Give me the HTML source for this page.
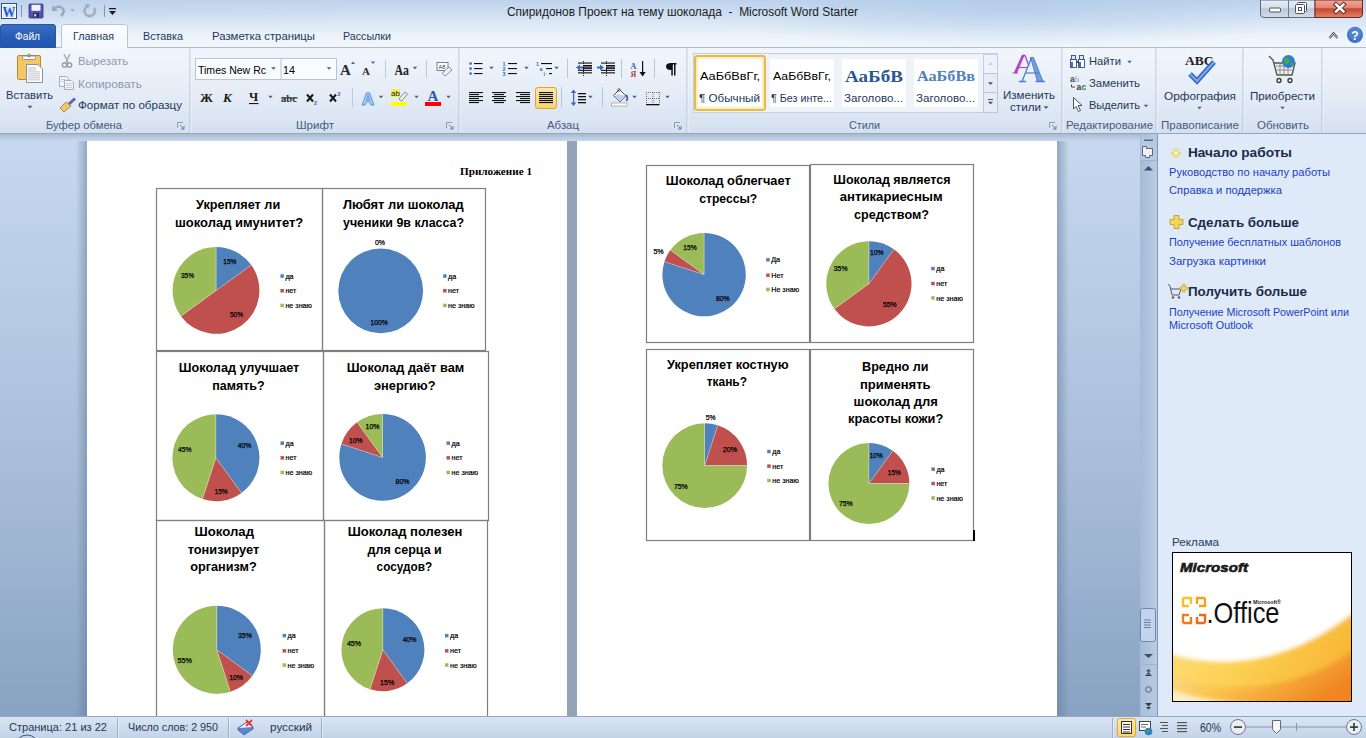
<!DOCTYPE html>
<html><head><meta charset="utf-8">
<style>
*{margin:0;padding:0;box-sizing:border-box}
html,body{width:1366px;height:738px;overflow:hidden;font-family:"Liberation Sans",sans-serif;background:#c5d7ee;position:relative}
.a{position:absolute}
svg text{white-space:pre}
</style></head><body>

<div class="a" style="left:0;top:0;width:1366px;height:47px;background:linear-gradient(180deg,#bdd3ec 0%,#d3e2f3 35%,#ebf2fa 75%,#f3f7fc 100%)"></div>
<div class="a" style="left:700px;top:-30px;width:620px;height:80px;background:radial-gradient(ellipse at center,rgba(170,198,232,.55) 0%,rgba(170,198,232,0) 70%)"></div>
<div class="a" style="left:-100px;top:-30px;width:500px;height:60px;background:radial-gradient(ellipse at center,rgba(190,210,236,.4) 0%,rgba(190,210,236,0) 70%)"></div>
<div class="a" style="left:0;top:47px;width:1366px;height:1px;background:#a9bdd6"></div>
<div class="a" style="left:0;top:48px;width:1366px;height:85px;background:linear-gradient(180deg,#f2f6fc 0%,#e7eef8 45%,#dce6f3 80%,#d5e0ef 100%)"></div>
<div class="a" style="left:0;top:133px;width:1366px;height:1px;background:#92a7c2"></div>
<div class="a" style="left:0;top:134px;width:1140px;height:7px;background:linear-gradient(180deg,#a9bbd1,#c6d8ee)"></div>
<div class="a" style="left:0;top:141px;width:1140px;height:575px;background:linear-gradient(180deg,#c5d8ef 0%,#b4c8e2 35%,#9fb6d3 70%,#88a2c3 100%)"></div>
<div class="a" style="left:76px;top:141px;width:11px;height:575px;background:linear-gradient(90deg,rgba(100,120,150,0),rgba(100,120,150,.5))"></div>
<div class="a" style="left:1057px;top:141px;width:12px;height:575px;background:linear-gradient(90deg,rgba(100,120,150,.5),rgba(100,120,150,0))"></div>
<div class="a" style="left:87px;top:141px;width:480px;height:575px;background:#fff"></div>
<div class="a" style="left:567px;top:141px;width:10px;height:575px;background:#94a3b6"></div>
<div class="a" style="left:577px;top:141px;width:480px;height:575px;background:#fff"></div>
<div class="a" style="left:1140px;top:134px;width:18px;height:582px;background:linear-gradient(90deg,#a4bad6,#b9cde6);"></div>
<div class="a" style="left:1157px;top:134px;width:1px;height:582px;background:#8599b3"></div>
<div class="a" style="left:1158px;top:134px;width:208px;height:582px;background:#dfeaf8"></div>
<div class="a" style="left:0;top:716px;width:1366px;height:22px;background:linear-gradient(180deg,#dce6f3 0%,#cfdcee 50%,#c3d3e8 100%)"></div>
<div class="a" style="left:0;top:716px;width:1366px;height:1px;background:#8ea5c3"></div>

<svg class="a" style="left:0;top:0" width="1366" height="738" viewBox="0 0 1366 738">
<defs>
<clipPath id="docclip"><rect x="0" y="141" width="1140" height="575"/></clipPath>
<linearGradient id="gfile" x1="0" y1="0" x2="0" y2="1"><stop offset="0" stop-color="#3b6fc4"/><stop offset="0.5" stop-color="#2a5db4"/><stop offset="1" stop-color="#1f56b0"/></linearGradient>
<linearGradient id="ghome" x1="0" y1="0" x2="0" y2="1"><stop offset="0" stop-color="#fbfdff"/><stop offset="1" stop-color="#f3f7fc"/></linearGradient>
<linearGradient id="gclose" x1="0" y1="0" x2="0" y2="1"><stop offset="0" stop-color="#f1a99c"/><stop offset="0.45" stop-color="#e28270"/><stop offset="0.5" stop-color="#c9452e"/><stop offset="1" stop-color="#e0866e"/></linearGradient>
<linearGradient id="gwin" x1="0" y1="0" x2="0" y2="1"><stop offset="0" stop-color="#e6edf6"/><stop offset="0.45" stop-color="#d5dfeb"/><stop offset="0.5" stop-color="#b9c8da"/><stop offset="1" stop-color="#d3deea"/></linearGradient>
<linearGradient id="gsel" x1="0" y1="0" x2="0" y2="1"><stop offset="0" stop-color="#fde9a5"/><stop offset="1" stop-color="#fcd667"/></linearGradient>
<linearGradient id="gad1" x1="0" y1="0" x2="1" y2="0.3"><stop offset="0" stop-color="#fde27e"/><stop offset="0.5" stop-color="#fcd054"/><stop offset="1" stop-color="#f8b634"/></linearGradient>
<linearGradient id="gad2" x1="0" y1="0" x2="1" y2="0.5"><stop offset="0" stop-color="#fdeab0"/><stop offset="0.5" stop-color="#fac24c"/><stop offset="1" stop-color="#ef7e1e"/></linearGradient>
<linearGradient id="gswoosh" x1="0" y1="0" x2="1" y2="1"><stop offset="0" stop-color="#fde88a"/><stop offset="0.5" stop-color="#f8b926"/><stop offset="1" stop-color="#ef7a1a"/></linearGradient>
</defs>
<text x="507" y="16" font-size="12" fill="#1b1b1b" font-weight="400" font-family="Liberation Sans" textLength="351" lengthAdjust="spacingAndGlyphs" xml:space="preserve">Спиридонов Проект на тему шоколада  -  Microsoft Word Starter</text>
<path d="M0.5,47.5 V27 Q0.5,24.5 3,24.5 H53 Q55.5,24.5 55.5,27 V47.5 Z" fill="url(#gfile)" stroke="#2a56a0" stroke-width="1"/>
<text x="15" y="40" font-size="11.3" fill="#ffffff" font-weight="400" font-family="Liberation Sans" textLength="25" lengthAdjust="spacingAndGlyphs" >Файл</text>
<path d="M61.5,48 V27 Q61.5,24.5 64,24.5 H124.5 Q127.5,24.5 127.5,27 V48" fill="url(#ghome)" stroke="#b4c6dd" stroke-width="1"/>
<rect x="62" y="46" width="65" height="3" fill="#f6f9fd"/>
<text x="73" y="40" font-size="11.3" fill="#1e395b" font-weight="400" font-family="Liberation Sans" textLength="41" lengthAdjust="spacingAndGlyphs" >Главная</text>
<text x="143" y="40" font-size="11.3" fill="#1e395b" font-weight="400" font-family="Liberation Sans" textLength="40" lengthAdjust="spacingAndGlyphs" >Вставка</text>
<text x="212" y="40" font-size="11.3" fill="#1e395b" font-weight="400" font-family="Liberation Sans" textLength="103" lengthAdjust="spacingAndGlyphs" >Разметка страницы</text>
<text x="343" y="40" font-size="11.3" fill="#1e395b" font-weight="400" font-family="Liberation Sans" textLength="48" lengthAdjust="spacingAndGlyphs" >Рассылки</text>
<text x="46" y="128.8" font-size="11.3" fill="#4a5a7e" font-weight="400" font-family="Liberation Sans" textLength="76" lengthAdjust="spacingAndGlyphs" >Буфер обмена</text>
<text x="296" y="128.8" font-size="11.3" fill="#4a5a7e" font-weight="400" font-family="Liberation Sans" textLength="38" lengthAdjust="spacingAndGlyphs" >Шрифт</text>
<text x="547" y="128.8" font-size="11.3" fill="#4a5a7e" font-weight="400" font-family="Liberation Sans" textLength="32" lengthAdjust="spacingAndGlyphs" >Абзац</text>
<text x="849" y="128.8" font-size="11.3" fill="#4a5a7e" font-weight="400" font-family="Liberation Sans" textLength="31" lengthAdjust="spacingAndGlyphs" >Стили</text>
<text x="1066" y="128.8" font-size="11.3" fill="#4a5a7e" font-weight="400" font-family="Liberation Sans" textLength="87" lengthAdjust="spacingAndGlyphs" >Редактирование</text>
<text x="1161" y="128.8" font-size="11.3" fill="#4a5a7e" font-weight="400" font-family="Liberation Sans" textLength="78" lengthAdjust="spacingAndGlyphs" >Правописание</text>
<text x="1257" y="128.8" font-size="11.3" fill="#4a5a7e" font-weight="400" font-family="Liberation Sans" textLength="52" lengthAdjust="spacingAndGlyphs" >Обновить</text>
<rect x="189.5" y="48" width="1" height="85" fill="#b0c1d6"/><rect x="190.5" y="48" width="1" height="85" fill="#f6f9fd" opacity=".7"/>
<rect x="458.5" y="48" width="1" height="85" fill="#b0c1d6"/><rect x="459.5" y="48" width="1" height="85" fill="#f6f9fd" opacity=".7"/>
<rect x="686.5" y="48" width="1" height="85" fill="#b0c1d6"/><rect x="687.5" y="48" width="1" height="85" fill="#f6f9fd" opacity=".7"/>
<rect x="1061.5" y="48" width="1" height="85" fill="#b0c1d6"/><rect x="1062.5" y="48" width="1" height="85" fill="#f6f9fd" opacity=".7"/>
<rect x="1155.5" y="48" width="1" height="85" fill="#b0c1d6"/><rect x="1156.5" y="48" width="1" height="85" fill="#f6f9fd" opacity=".7"/>
<rect x="1242.5" y="48" width="1" height="85" fill="#b0c1d6"/><rect x="1243.5" y="48" width="1" height="85" fill="#f6f9fd" opacity=".7"/>
<rect x="1321.5" y="48" width="1" height="85" fill="#b0c1d6"/><rect x="1322.5" y="48" width="1" height="85" fill="#f6f9fd" opacity=".7"/>
<text x="6" y="98.8" font-size="11.3" fill="#1e395b" font-weight="400" font-family="Liberation Sans" textLength="47" lengthAdjust="spacingAndGlyphs" >Вставить</text>
<text x="78" y="64.8" font-size="11.3" fill="#8e9aab" font-weight="400" font-family="Liberation Sans" textLength="50" lengthAdjust="spacingAndGlyphs" >Вырезать</text>
<text x="78" y="87.8" font-size="11.3" fill="#8e9aab" font-weight="400" font-family="Liberation Sans" textLength="64" lengthAdjust="spacingAndGlyphs" >Копировать</text>
<text x="78" y="109.1" font-size="11.3" fill="#1e395b" font-weight="400" font-family="Liberation Sans" textLength="104" lengthAdjust="spacingAndGlyphs" >Формат по образцу</text>
<rect x="195.5" y="58.5" width="141" height="21" fill="#f9fbfe" stroke="#b6c6da"/>
<rect x="280.5" y="58.5" width="1" height="21" fill="#b6c6da"/>
<text x="198" y="73.8" font-size="11" fill="#000000" font-weight="400" font-family="Liberation Sans" textLength="68" lengthAdjust="spacingAndGlyphs" >Times New Rc</text>
<text x="283" y="73.8" font-size="11" fill="#000000" font-weight="400" font-family="Liberation Sans" textLength="12" lengthAdjust="spacingAndGlyphs" >14</text>
<rect x="693.5" y="53.5" width="304" height="59" fill="#eef3fa" stroke="#c2d0e2"/>
<rect x="695" y="56" width="70" height="54" rx="2.5" fill="#fff" stroke="#e9b94a" stroke-width="2"/><rect x="697" y="58" width="66" height="50" fill="none" stroke="#fde7a2" stroke-width="1.4"/>
<rect x="770" y="59" width="64" height="48" fill="#fff"/>
<rect x="842" y="59" width="64" height="48" fill="#fff"/>
<rect x="914" y="59" width="64" height="48" fill="#fff"/>
<text x="700" y="79.8" font-size="11.3" fill="#000" font-weight="400" font-family="Liberation Sans" textLength="60" lengthAdjust="spacingAndGlyphs" >АаБбВвГг,</text>
<text x="699" y="101.8" font-size="11.3" fill="#1e395b" font-weight="400" font-family="Liberation Sans" textLength="61" lengthAdjust="spacingAndGlyphs" >¶ Обычный</text>
<text x="773" y="79.8" font-size="11.3" fill="#000" font-weight="400" font-family="Liberation Sans" textLength="58" lengthAdjust="spacingAndGlyphs" >АаБбВвГг,</text>
<text x="771" y="101.8" font-size="11.3" fill="#1e395b" font-weight="400" font-family="Liberation Sans" textLength="61" lengthAdjust="spacingAndGlyphs" >¶ Без инте...</text>
<text x="845" y="81.8" font-size="17" fill="#2b5796" font-weight="700" font-family="Liberation Serif" textLength="58" lengthAdjust="spacingAndGlyphs" >АаБбВ</text>
<text x="844" y="101.8" font-size="11.3" fill="#1e395b" font-weight="400" font-family="Liberation Sans" textLength="59" lengthAdjust="spacingAndGlyphs" >Заголово...</text>
<text x="917" y="80.8" font-size="15" fill="#4f81bd" font-weight="700" font-family="Liberation Serif" textLength="58" lengthAdjust="spacingAndGlyphs" >АаБбВв</text>
<text x="916" y="101.8" font-size="11.3" fill="#1e395b" font-weight="400" font-family="Liberation Sans" textLength="59" lengthAdjust="spacingAndGlyphs" >Заголово...</text>
<text x="1003" y="98.8" font-size="11.3" fill="#1e395b" font-weight="400" font-family="Liberation Sans" textLength="52" lengthAdjust="spacingAndGlyphs" >Изменить</text>
<text x="1010" y="110.8" font-size="11.3" fill="#1e395b" font-weight="400" font-family="Liberation Sans" textLength="31" lengthAdjust="spacingAndGlyphs" >стили</text>
<text x="1089" y="64.8" font-size="11.3" fill="#1e395b" font-weight="400" font-family="Liberation Sans" textLength="32" lengthAdjust="spacingAndGlyphs" >Найти</text>
<text x="1089" y="87.1" font-size="11.3" fill="#1e395b" font-weight="400" font-family="Liberation Sans" textLength="51" lengthAdjust="spacingAndGlyphs" >Заменить</text>
<text x="1089" y="108.8" font-size="11.3" fill="#1e395b" font-weight="400" font-family="Liberation Sans" textLength="51" lengthAdjust="spacingAndGlyphs" >Выделить</text>
<text x="1164" y="99.8" font-size="11.3" fill="#1e395b" font-weight="400" font-family="Liberation Sans" textLength="72" lengthAdjust="spacingAndGlyphs" >Орфография</text>
<text x="1250" y="99.8" font-size="11.3" fill="#1e395b" font-weight="400" font-family="Liberation Sans" textLength="65" lengthAdjust="spacingAndGlyphs" >Приобрести</text>
<text x="9" y="730.8" font-size="11.3" fill="#1e395b" font-weight="400" font-family="Liberation Sans" textLength="98" lengthAdjust="spacingAndGlyphs" >Страница: 21 из 22</text>
<text x="128" y="730.8" font-size="11.3" fill="#1e395b" font-weight="400" font-family="Liberation Sans" textLength="90" lengthAdjust="spacingAndGlyphs" >Число слов: 2 950</text>
<text x="270" y="730.8" font-size="11.3" fill="#1e395b" font-weight="400" font-family="Liberation Sans" textLength="42" lengthAdjust="spacingAndGlyphs" >русский</text>
<text x="1200" y="731.8" font-size="12" fill="#1e395b" font-weight="400" font-family="Liberation Sans" textLength="21" lengthAdjust="spacingAndGlyphs" >60%</text>
<text x="1188" y="157" font-size="13" fill="#1c2a4a" font-weight="700" font-family="Liberation Sans" textLength="104" lengthAdjust="spacingAndGlyphs" >Начало работы</text>
<text x="1169" y="176" font-size="11.3" fill="#1a40c4" font-weight="400" font-family="Liberation Sans" textLength="161" lengthAdjust="spacingAndGlyphs" >Руководство по началу работы</text>
<text x="1169" y="194" font-size="11.3" fill="#1a40c4" font-weight="400" font-family="Liberation Sans" textLength="113" lengthAdjust="spacingAndGlyphs" >Справка и поддержка</text>
<text x="1188" y="227" font-size="13" fill="#1c2a4a" font-weight="700" font-family="Liberation Sans" textLength="111" lengthAdjust="spacingAndGlyphs" >Сделать больше</text>
<text x="1169" y="246" font-size="11.3" fill="#1a40c4" font-weight="400" font-family="Liberation Sans" textLength="172" lengthAdjust="spacingAndGlyphs" >Получение бесплатных шаблонов</text>
<text x="1169" y="265" font-size="11.3" fill="#1a40c4" font-weight="400" font-family="Liberation Sans" textLength="97" lengthAdjust="spacingAndGlyphs" >Загрузка картинки</text>
<text x="1188" y="296" font-size="13" fill="#1c2a4a" font-weight="700" font-family="Liberation Sans" textLength="119" lengthAdjust="spacingAndGlyphs" >Получить больше</text>
<text x="1169" y="316" font-size="11.3" fill="#1a40c4" font-weight="400" font-family="Liberation Sans" textLength="180" lengthAdjust="spacingAndGlyphs" >Получение Microsoft PowerPoint или</text>
<text x="1169" y="329" font-size="11.3" fill="#1a40c4" font-weight="400" font-family="Liberation Sans" textLength="84" lengthAdjust="spacingAndGlyphs" >Microsoft Outlook</text>
<text x="1172" y="546" font-size="11.3" fill="#2a3a5c" font-weight="400" font-family="Liberation Sans" textLength="47" lengthAdjust="spacingAndGlyphs" >Реклама</text>
<rect x="1172.5" y="552.5" width="179" height="149" fill="#fff" stroke="#000"/>
<g clip-path="url(#docclip)">
<text x="460" y="175" font-size="11.2" fill="#000" font-weight="700" font-family="Liberation Serif" textLength="72" lengthAdjust="spacingAndGlyphs" >Приложение 1</text>
<rect x="156.5" y="188.5" width="166" height="162" fill="none" stroke="#7f7f7f" stroke-width="1.2"/>
<rect x="322.5" y="188.5" width="163" height="162" fill="none" stroke="#7f7f7f" stroke-width="1.2"/>
<text x="196" y="208.5" font-size="12.2" fill="#000" font-weight="700" font-family="Liberation Sans" textLength="84.19999999999999" lengthAdjust="spacingAndGlyphs" >Укрепляет ли</text>
<text x="174.9" y="226.5" font-size="12.2" fill="#000" font-weight="700" font-family="Liberation Sans" textLength="128.4" lengthAdjust="spacingAndGlyphs" >шоколад имунитет?</text>
<path d="M216.1,290.6 L216.10,247.10 A43.5,43.5 0 0 1 251.29,265.03 Z" fill="#4f81bd"/>
<path d="M216.1,290.6 L251.29,265.03 A43.5,43.5 0 0 1 180.91,316.17 Z" fill="#c0504d"/>
<path d="M216.1,290.6 L180.91,316.17 A43.5,43.5 0 0 1 216.10,247.10 Z" fill="#9bbb59"/>
<line x1="216.1" y1="290.6" x2="216.10" y2="247.10" stroke="#fff" stroke-width="0.5" opacity=".6"/>
<line x1="216.1" y1="290.6" x2="251.29" y2="265.03" stroke="#fff" stroke-width="0.5" opacity=".6"/>
<line x1="216.1" y1="290.6" x2="180.91" y2="316.17" stroke="#fff" stroke-width="0.5" opacity=".6"/>
<text x="223.3" y="264.40000000000003" font-size="7.2" fill="#000" font-weight="400" font-family="Liberation Sans" textLength="13.099999999999994" lengthAdjust="spacingAndGlyphs" stroke="#000" stroke-width="0.25">15%</text>
<text x="230" y="317.0" font-size="7.2" fill="#000" font-weight="400" font-family="Liberation Sans" textLength="13" lengthAdjust="spacingAndGlyphs" stroke="#000" stroke-width="0.25">50%</text>
<text x="181" y="278.2" font-size="7.2" fill="#000" font-weight="400" font-family="Liberation Sans" textLength="13" lengthAdjust="spacingAndGlyphs" stroke="#000" stroke-width="0.25">35%</text>
<rect x="280.4" y="274.3" width="3.5" height="3.5" fill="#4f81bd"/>
<text x="285.4" y="278.6" font-size="7.2" fill="#000" font-weight="400" font-family="Liberation Sans" text-anchor="start" stroke="#000" stroke-width="0.2">да</text>
<rect x="280.4" y="289.0" width="3.5" height="3.5" fill="#c0504d"/>
<text x="285.4" y="293.3" font-size="7.2" fill="#000" font-weight="400" font-family="Liberation Sans" text-anchor="start" stroke="#000" stroke-width="0.2">нет</text>
<rect x="280.4" y="303.7" width="3.5" height="3.5" fill="#9bbb59"/>
<text x="285.4" y="308.0" font-size="7.2" fill="#000" font-weight="400" font-family="Liberation Sans" text-anchor="start" stroke="#000" stroke-width="0.2">не знаю</text>
<text x="342.9" y="208.5" font-size="12.2" fill="#000" font-weight="700" font-family="Liberation Sans" textLength="120.80000000000001" lengthAdjust="spacingAndGlyphs" >Любят ли шоколад</text>
<text x="343" y="226.5" font-size="12.2" fill="#000" font-weight="700" font-family="Liberation Sans" textLength="121" lengthAdjust="spacingAndGlyphs" >ученики 9в класса?</text>
<circle cx="380.7" cy="290.8" r="42.4" fill="#4f81bd"/>
<text x="375" y="244.8" font-size="7.2" fill="#000" font-weight="400" font-family="Liberation Sans" textLength="10" lengthAdjust="spacingAndGlyphs" stroke="#000" stroke-width="0.25">0%</text>
<text x="370.5" y="325.2" font-size="7.2" fill="#000" font-weight="400" font-family="Liberation Sans" textLength="17.100000000000023" lengthAdjust="spacingAndGlyphs" stroke="#000" stroke-width="0.25">100%</text>
<rect x="443.1" y="274.3" width="3.5" height="3.5" fill="#4f81bd"/>
<text x="448.1" y="278.6" font-size="7.2" fill="#000" font-weight="400" font-family="Liberation Sans" text-anchor="start" stroke="#000" stroke-width="0.2">да</text>
<rect x="443.1" y="289.0" width="3.5" height="3.5" fill="#c0504d"/>
<text x="448.1" y="293.3" font-size="7.2" fill="#000" font-weight="400" font-family="Liberation Sans" text-anchor="start" stroke="#000" stroke-width="0.2">нет</text>
<rect x="443.1" y="303.7" width="3.5" height="3.5" fill="#9bbb59"/>
<text x="448.1" y="308.0" font-size="7.2" fill="#000" font-weight="400" font-family="Liberation Sans" text-anchor="start" stroke="#000" stroke-width="0.2">не знаю</text>
<rect x="156.5" y="351.5" width="167" height="169" fill="none" stroke="#7f7f7f" stroke-width="1.2"/>
<rect x="323.5" y="351.5" width="165" height="169" fill="none" stroke="#7f7f7f" stroke-width="1.2"/>
<text x="178.8" y="372.3" font-size="12.2" fill="#000" font-weight="700" font-family="Liberation Sans" textLength="120.5" lengthAdjust="spacingAndGlyphs" >Шоколад улучшает</text>
<text x="212.2" y="390.1" font-size="12.2" fill="#000" font-weight="700" font-family="Liberation Sans" textLength="52.400000000000034" lengthAdjust="spacingAndGlyphs" >память?</text>
<path d="M215.9,457.7 L215.90,414.20 A43.5,43.5 0 0 1 241.47,492.89 Z" fill="#4f81bd"/>
<path d="M215.9,457.7 L241.47,492.89 A43.5,43.5 0 0 1 202.46,499.07 Z" fill="#c0504d"/>
<path d="M215.9,457.7 L202.46,499.07 A43.5,43.5 0 0 1 215.90,414.20 Z" fill="#9bbb59"/>
<line x1="215.9" y1="457.7" x2="215.90" y2="414.20" stroke="#fff" stroke-width="0.5" opacity=".6"/>
<line x1="215.9" y1="457.7" x2="241.47" y2="492.89" stroke="#fff" stroke-width="0.5" opacity=".6"/>
<line x1="215.9" y1="457.7" x2="202.46" y2="499.07" stroke="#fff" stroke-width="0.5" opacity=".6"/>
<text x="237.8" y="448.1" font-size="7.2" fill="#000" font-weight="400" font-family="Liberation Sans" textLength="13.399999999999977" lengthAdjust="spacingAndGlyphs" stroke="#000" stroke-width="0.25">40%</text>
<text x="214.6" y="494.40000000000003" font-size="7.2" fill="#000" font-weight="400" font-family="Liberation Sans" textLength="13.0" lengthAdjust="spacingAndGlyphs" stroke="#000" stroke-width="0.25">15%</text>
<text x="178" y="451.8" font-size="7.2" fill="#000" font-weight="400" font-family="Liberation Sans" textLength="13.5" lengthAdjust="spacingAndGlyphs" stroke="#000" stroke-width="0.25">45%</text>
<rect x="280.5" y="441.40000000000003" width="3.5" height="3.5" fill="#4f81bd"/>
<text x="285.5" y="445.70000000000005" font-size="7.2" fill="#000" font-weight="400" font-family="Liberation Sans" text-anchor="start" stroke="#000" stroke-width="0.2">да</text>
<rect x="280.5" y="456.1" width="3.5" height="3.5" fill="#c0504d"/>
<text x="285.5" y="460.40000000000003" font-size="7.2" fill="#000" font-weight="400" font-family="Liberation Sans" text-anchor="start" stroke="#000" stroke-width="0.2">нет</text>
<rect x="280.5" y="470.7" width="3.5" height="3.5" fill="#9bbb59"/>
<text x="285.5" y="475.0" font-size="7.2" fill="#000" font-weight="400" font-family="Liberation Sans" text-anchor="start" stroke="#000" stroke-width="0.2">не знаю</text>
<text x="346.8" y="372" font-size="12.2" fill="#000" font-weight="700" font-family="Liberation Sans" textLength="117.5" lengthAdjust="spacingAndGlyphs" >Шоколад даёт вам</text>
<text x="374" y="390" font-size="12.2" fill="#000" font-weight="700" font-family="Liberation Sans" textLength="61.60000000000002" lengthAdjust="spacingAndGlyphs" >энергию?</text>
<path d="M382.6,457.4 L382.60,414.10 A43.3,43.3 0 1 1 341.42,444.02 Z" fill="#4f81bd"/>
<path d="M382.6,457.4 L341.42,444.02 A43.3,43.3 0 0 1 357.15,422.37 Z" fill="#c0504d"/>
<path d="M382.6,457.4 L357.15,422.37 A43.3,43.3 0 0 1 382.60,414.10 Z" fill="#9bbb59"/>
<line x1="382.6" y1="457.4" x2="382.60" y2="414.10" stroke="#fff" stroke-width="0.5" opacity=".6"/>
<line x1="382.6" y1="457.4" x2="341.42" y2="444.02" stroke="#fff" stroke-width="0.5" opacity=".6"/>
<line x1="382.6" y1="457.4" x2="357.15" y2="422.37" stroke="#fff" stroke-width="0.5" opacity=".6"/>
<text x="365.6" y="428.8" font-size="7.2" fill="#000" font-weight="400" font-family="Liberation Sans" textLength="13.899999999999977" lengthAdjust="spacingAndGlyphs" stroke="#000" stroke-width="0.25">10%</text>
<text x="349" y="442.8" font-size="7.2" fill="#000" font-weight="400" font-family="Liberation Sans" textLength="13.399999999999977" lengthAdjust="spacingAndGlyphs" stroke="#000" stroke-width="0.25">10%</text>
<text x="395.6" y="483.8" font-size="7.2" fill="#000" font-weight="400" font-family="Liberation Sans" textLength="13.899999999999977" lengthAdjust="spacingAndGlyphs" stroke="#000" stroke-width="0.25">80%</text>
<rect x="446.5" y="441.40000000000003" width="3.5" height="3.5" fill="#4f81bd"/>
<text x="451.5" y="445.70000000000005" font-size="7.2" fill="#000" font-weight="400" font-family="Liberation Sans" text-anchor="start" stroke="#000" stroke-width="0.2">да</text>
<rect x="446.5" y="456.1" width="3.5" height="3.5" fill="#c0504d"/>
<text x="451.5" y="460.40000000000003" font-size="7.2" fill="#000" font-weight="400" font-family="Liberation Sans" text-anchor="start" stroke="#000" stroke-width="0.2">нет</text>
<rect x="446.5" y="470.7" width="3.5" height="3.5" fill="#9bbb59"/>
<text x="451.5" y="475.0" font-size="7.2" fill="#000" font-weight="400" font-family="Liberation Sans" text-anchor="start" stroke="#000" stroke-width="0.2">не знаю</text>
<rect x="156.5" y="520.5" width="168" height="220" fill="none" stroke="#7f7f7f" stroke-width="1.2"/>
<rect x="324.5" y="520.5" width="163" height="220" fill="none" stroke="#7f7f7f" stroke-width="1.2"/>
<text x="194.6" y="536" font-size="12.2" fill="#000" font-weight="700" font-family="Liberation Sans" textLength="59.400000000000006" lengthAdjust="spacingAndGlyphs" >Шоколад</text>
<text x="187.7" y="553.7" font-size="12.2" fill="#000" font-weight="700" font-family="Liberation Sans" textLength="71.60000000000002" lengthAdjust="spacingAndGlyphs" >тонизирует</text>
<text x="190.2" y="570.8" font-size="12.2" fill="#000" font-weight="700" font-family="Liberation Sans" textLength="66.60000000000002" lengthAdjust="spacingAndGlyphs" >организм?</text>
<path d="M216.8,649.8 L216.80,605.80 A44,44 0 0 1 252.40,675.66 Z" fill="#4f81bd"/>
<path d="M216.8,649.8 L252.40,675.66 A44,44 0 0 1 230.40,691.65 Z" fill="#c0504d"/>
<path d="M216.8,649.8 L230.40,691.65 A44,44 0 1 1 216.80,605.80 Z" fill="#9bbb59"/>
<line x1="216.8" y1="649.8" x2="216.80" y2="605.80" stroke="#fff" stroke-width="0.5" opacity=".6"/>
<line x1="216.8" y1="649.8" x2="252.40" y2="675.66" stroke="#fff" stroke-width="0.5" opacity=".6"/>
<line x1="216.8" y1="649.8" x2="230.40" y2="691.65" stroke="#fff" stroke-width="0.5" opacity=".6"/>
<text x="238" y="637.8" font-size="7.2" fill="#000" font-weight="400" font-family="Liberation Sans" textLength="13.800000000000011" lengthAdjust="spacingAndGlyphs" stroke="#000" stroke-width="0.25">35%</text>
<text x="229.2" y="680.4" font-size="7.2" fill="#000" font-weight="400" font-family="Liberation Sans" textLength="13.800000000000011" lengthAdjust="spacingAndGlyphs" stroke="#000" stroke-width="0.25">10%</text>
<text x="177.5" y="662.5" font-size="7.2" fill="#000" font-weight="400" font-family="Liberation Sans" textLength="14.300000000000011" lengthAdjust="spacingAndGlyphs" stroke="#000" stroke-width="0.25">55%</text>
<rect x="282.6" y="633.9" width="3.5" height="3.5" fill="#4f81bd"/>
<text x="287.6" y="638.2" font-size="7.2" fill="#000" font-weight="400" font-family="Liberation Sans" text-anchor="start" stroke="#000" stroke-width="0.2">да</text>
<rect x="282.6" y="649.0999999999999" width="3.5" height="3.5" fill="#c0504d"/>
<text x="287.6" y="653.4" font-size="7.2" fill="#000" font-weight="400" font-family="Liberation Sans" text-anchor="start" stroke="#000" stroke-width="0.2">нет</text>
<rect x="282.6" y="663.3" width="3.5" height="3.5" fill="#9bbb59"/>
<text x="287.6" y="667.6" font-size="7.2" fill="#000" font-weight="400" font-family="Liberation Sans" text-anchor="start" stroke="#000" stroke-width="0.2">не знаю</text>
<text x="347.7" y="536" font-size="12.2" fill="#000" font-weight="700" font-family="Liberation Sans" textLength="114.69999999999999" lengthAdjust="spacingAndGlyphs" >Шоколад полезен</text>
<text x="367.5" y="553.7" font-size="12.2" fill="#000" font-weight="700" font-family="Liberation Sans" textLength="74.30000000000001" lengthAdjust="spacingAndGlyphs" >для серца и</text>
<text x="376.6" y="570.8" font-size="12.2" fill="#000" font-weight="700" font-family="Liberation Sans" textLength="55.599999999999966" lengthAdjust="spacingAndGlyphs" >сосудов?</text>
<path d="M382.9,649.8 L382.90,608.30 A41.5,41.5 0 0 1 407.29,683.37 Z" fill="#4f81bd"/>
<path d="M382.9,649.8 L407.29,683.37 A41.5,41.5 0 0 1 370.08,689.27 Z" fill="#c0504d"/>
<path d="M382.9,649.8 L370.08,689.27 A41.5,41.5 0 0 1 382.90,608.30 Z" fill="#9bbb59"/>
<line x1="382.9" y1="649.8" x2="382.90" y2="608.30" stroke="#fff" stroke-width="0.5" opacity=".6"/>
<line x1="382.9" y1="649.8" x2="407.29" y2="683.37" stroke="#fff" stroke-width="0.5" opacity=".6"/>
<line x1="382.9" y1="649.8" x2="370.08" y2="689.27" stroke="#fff" stroke-width="0.5" opacity=".6"/>
<text x="402.7" y="641.8" font-size="7.2" fill="#000" font-weight="400" font-family="Liberation Sans" textLength="13.800000000000011" lengthAdjust="spacingAndGlyphs" stroke="#000" stroke-width="0.25">40%</text>
<text x="380" y="685.3" font-size="7.2" fill="#000" font-weight="400" font-family="Liberation Sans" textLength="14.199999999999989" lengthAdjust="spacingAndGlyphs" stroke="#000" stroke-width="0.25">15%</text>
<text x="346.9" y="645.8" font-size="7.2" fill="#000" font-weight="400" font-family="Liberation Sans" textLength="14.300000000000011" lengthAdjust="spacingAndGlyphs" stroke="#000" stroke-width="0.25">45%</text>
<rect x="445" y="633.9" width="3.5" height="3.5" fill="#4f81bd"/>
<text x="450" y="638.2" font-size="7.2" fill="#000" font-weight="400" font-family="Liberation Sans" text-anchor="start" stroke="#000" stroke-width="0.2">да</text>
<rect x="445" y="649.0999999999999" width="3.5" height="3.5" fill="#c0504d"/>
<text x="450" y="653.4" font-size="7.2" fill="#000" font-weight="400" font-family="Liberation Sans" text-anchor="start" stroke="#000" stroke-width="0.2">нет</text>
<rect x="445" y="663.3" width="3.5" height="3.5" fill="#9bbb59"/>
<text x="450" y="667.6" font-size="7.2" fill="#000" font-weight="400" font-family="Liberation Sans" text-anchor="start" stroke="#000" stroke-width="0.2">не знаю</text>
<rect x="646.5" y="165.5" width="163" height="177" fill="none" stroke="#7f7f7f" stroke-width="1.2"/>
<rect x="810.5" y="164.5" width="163" height="178" fill="none" stroke="#7f7f7f" stroke-width="1.2"/>
<text x="665.8" y="185" font-size="12.2" fill="#000" font-weight="700" font-family="Liberation Sans" textLength="124.90000000000009" lengthAdjust="spacingAndGlyphs" >Шоколад облегчает</text>
<text x="699.2" y="202.5" font-size="12.2" fill="#000" font-weight="700" font-family="Liberation Sans" textLength="58.0" lengthAdjust="spacingAndGlyphs" >стрессы?</text>
<path d="M704.1,274.6 L704.10,232.90 A41.7,41.7 0 1 1 664.44,261.71 Z" fill="#4f81bd"/>
<path d="M704.1,274.6 L664.44,261.71 A41.7,41.7 0 0 1 670.36,250.09 Z" fill="#c0504d"/>
<path d="M704.1,274.6 L670.36,250.09 A41.7,41.7 0 0 1 704.10,232.90 Z" fill="#9bbb59"/>
<line x1="704.1" y1="274.6" x2="704.10" y2="232.90" stroke="#fff" stroke-width="0.5" opacity=".6"/>
<line x1="704.1" y1="274.6" x2="664.44" y2="261.71" stroke="#fff" stroke-width="0.5" opacity=".6"/>
<line x1="704.1" y1="274.6" x2="670.36" y2="250.09" stroke="#fff" stroke-width="0.5" opacity=".6"/>
<text x="653.4" y="253.5" font-size="7.2" fill="#000" font-weight="400" font-family="Liberation Sans" textLength="10.300000000000068" lengthAdjust="spacingAndGlyphs" stroke="#000" stroke-width="0.25">5%</text>
<text x="683.3" y="250.3" font-size="7.2" fill="#000" font-weight="400" font-family="Liberation Sans" textLength="13.400000000000091" lengthAdjust="spacingAndGlyphs" stroke="#000" stroke-width="0.25">15%</text>
<text x="716" y="301.40000000000003" font-size="7.2" fill="#000" font-weight="400" font-family="Liberation Sans" textLength="13.600000000000023" lengthAdjust="spacingAndGlyphs" stroke="#000" stroke-width="0.25">80%</text>
<rect x="766.2" y="258.1" width="3.5" height="3.5" fill="#4f81bd"/>
<text x="771.2" y="262.40000000000003" font-size="7.2" fill="#000" font-weight="400" font-family="Liberation Sans" text-anchor="start" stroke="#000" stroke-width="0.2">Да</text>
<rect x="766.2" y="273.5" width="3.5" height="3.5" fill="#c0504d"/>
<text x="771.2" y="277.8" font-size="7.2" fill="#000" font-weight="400" font-family="Liberation Sans" text-anchor="start" stroke="#000" stroke-width="0.2">Нет</text>
<rect x="766.2" y="287.7" width="3.5" height="3.5" fill="#9bbb59"/>
<text x="771.2" y="292.0" font-size="7.2" fill="#000" font-weight="400" font-family="Liberation Sans" text-anchor="start" stroke="#000" stroke-width="0.2">Не знаю</text>
<text x="833.3" y="183.7" font-size="12.2" fill="#000" font-weight="700" font-family="Liberation Sans" textLength="117.20000000000005" lengthAdjust="spacingAndGlyphs" >Шоколад является</text>
<text x="839.8" y="201.2" font-size="12.2" fill="#000" font-weight="700" font-family="Liberation Sans" textLength="103.0" lengthAdjust="spacingAndGlyphs" >антикариесным</text>
<text x="854" y="218.7" font-size="12.2" fill="#000" font-weight="700" font-family="Liberation Sans" textLength="75" lengthAdjust="spacingAndGlyphs" >средством?</text>
<path d="M868.9,283.8 L868.90,241.20 A42.6,42.6 0 0 1 893.94,249.34 Z" fill="#4f81bd"/>
<path d="M868.9,283.8 L893.94,249.34 A42.6,42.6 0 1 1 834.44,308.84 Z" fill="#c0504d"/>
<path d="M868.9,283.8 L834.44,308.84 A42.6,42.6 0 0 1 868.90,241.20 Z" fill="#9bbb59"/>
<line x1="868.9" y1="283.8" x2="868.90" y2="241.20" stroke="#fff" stroke-width="0.5" opacity=".6"/>
<line x1="868.9" y1="283.8" x2="893.94" y2="249.34" stroke="#fff" stroke-width="0.5" opacity=".6"/>
<line x1="868.9" y1="283.8" x2="834.44" y2="308.84" stroke="#fff" stroke-width="0.5" opacity=".6"/>
<text x="870" y="254.8" font-size="7.2" fill="#000" font-weight="400" font-family="Liberation Sans" textLength="13.5" lengthAdjust="spacingAndGlyphs" stroke="#000" stroke-width="0.25">10%</text>
<text x="883" y="306.6" font-size="7.2" fill="#000" font-weight="400" font-family="Liberation Sans" textLength="13.399999999999977" lengthAdjust="spacingAndGlyphs" stroke="#000" stroke-width="0.25">55%</text>
<text x="833.8" y="270.90000000000003" font-size="7.2" fill="#000" font-weight="400" font-family="Liberation Sans" textLength="13.700000000000045" lengthAdjust="spacingAndGlyphs" stroke="#000" stroke-width="0.25">35%</text>
<rect x="931.2" y="266.8" width="3.5" height="3.5" fill="#4f81bd"/>
<text x="936.2" y="271.1" font-size="7.2" fill="#000" font-weight="400" font-family="Liberation Sans" text-anchor="start" stroke="#000" stroke-width="0.2">да</text>
<rect x="931.2" y="281.8" width="3.5" height="3.5" fill="#c0504d"/>
<text x="936.2" y="286.1" font-size="7.2" fill="#000" font-weight="400" font-family="Liberation Sans" text-anchor="start" stroke="#000" stroke-width="0.2">нет</text>
<rect x="931.2" y="296.2" width="3.5" height="3.5" fill="#9bbb59"/>
<text x="936.2" y="300.5" font-size="7.2" fill="#000" font-weight="400" font-family="Liberation Sans" text-anchor="start" stroke="#000" stroke-width="0.2">не знаю</text>
<rect x="646.5" y="349.5" width="163" height="191" fill="none" stroke="#7f7f7f" stroke-width="1.2"/>
<rect x="810.5" y="349.5" width="163" height="191" fill="none" stroke="#7f7f7f" stroke-width="1.2"/>
<text x="667" y="369.2" font-size="12.2" fill="#000" font-weight="700" font-family="Liberation Sans" textLength="121.60000000000002" lengthAdjust="spacingAndGlyphs" >Укрепляет костную</text>
<text x="706.7" y="385.8" font-size="12.2" fill="#000" font-weight="700" font-family="Liberation Sans" textLength="40.299999999999955" lengthAdjust="spacingAndGlyphs" >ткань?</text>
<path d="M704.7,465.6 L704.70,423.20 A42.4,42.4 0 0 1 717.80,425.28 Z" fill="#4f81bd"/>
<path d="M704.7,465.6 L717.80,425.28 A42.4,42.4 0 0 1 747.10,465.60 Z" fill="#c0504d"/>
<path d="M704.7,465.6 L747.10,465.60 A42.4,42.4 0 1 1 704.70,423.20 Z" fill="#9bbb59"/>
<line x1="704.7" y1="465.6" x2="704.70" y2="423.20" stroke="#fff" stroke-width="0.5" opacity=".6"/>
<line x1="704.7" y1="465.6" x2="717.80" y2="425.28" stroke="#fff" stroke-width="0.5" opacity=".6"/>
<line x1="704.7" y1="465.6" x2="747.10" y2="465.60" stroke="#fff" stroke-width="0.5" opacity=".6"/>
<text x="705.8" y="420.3" font-size="7.2" fill="#000" font-weight="400" font-family="Liberation Sans" textLength="9.800000000000068" lengthAdjust="spacingAndGlyphs" stroke="#000" stroke-width="0.25">5%</text>
<text x="722.8" y="451.8" font-size="7.2" fill="#000" font-weight="400" font-family="Liberation Sans" textLength="14.400000000000091" lengthAdjust="spacingAndGlyphs" stroke="#000" stroke-width="0.25">20%</text>
<text x="673.9" y="489.3" font-size="7.2" fill="#000" font-weight="400" font-family="Liberation Sans" textLength="13.899999999999977" lengthAdjust="spacingAndGlyphs" stroke="#000" stroke-width="0.25">75%</text>
<rect x="767.2" y="449.8" width="3.5" height="3.5" fill="#4f81bd"/>
<text x="772.2" y="454.1" font-size="7.2" fill="#000" font-weight="400" font-family="Liberation Sans" text-anchor="start" stroke="#000" stroke-width="0.2">да</text>
<rect x="767.2" y="464.40000000000003" width="3.5" height="3.5" fill="#c0504d"/>
<text x="772.2" y="468.70000000000005" font-size="7.2" fill="#000" font-weight="400" font-family="Liberation Sans" text-anchor="start" stroke="#000" stroke-width="0.2">нет</text>
<rect x="767.2" y="478.8" width="3.5" height="3.5" fill="#9bbb59"/>
<text x="772.2" y="483.1" font-size="7.2" fill="#000" font-weight="400" font-family="Liberation Sans" text-anchor="start" stroke="#000" stroke-width="0.2">не знаю</text>
<text x="862" y="371.1" font-size="12.2" fill="#000" font-weight="700" font-family="Liberation Sans" textLength="66.60000000000002" lengthAdjust="spacingAndGlyphs" >Вредно ли</text>
<text x="860" y="389.4" font-size="12.2" fill="#000" font-weight="700" font-family="Liberation Sans" textLength="70.60000000000002" lengthAdjust="spacingAndGlyphs" >применять</text>
<text x="853.6" y="406.1" font-size="12.2" fill="#000" font-weight="700" font-family="Liberation Sans" textLength="84.19999999999993" lengthAdjust="spacingAndGlyphs" >шоколад для</text>
<text x="848" y="423.3" font-size="12.2" fill="#000" font-weight="700" font-family="Liberation Sans" textLength="95.29999999999995" lengthAdjust="spacingAndGlyphs" >красоты кожи?</text>
<path d="M868.9,483.6 L868.90,443.10 A40.5,40.5 0 0 1 892.71,450.83 Z" fill="#4f81bd"/>
<path d="M868.9,483.6 L892.71,450.83 A40.5,40.5 0 0 1 909.40,483.60 Z" fill="#c0504d"/>
<path d="M868.9,483.6 L909.40,483.60 A40.5,40.5 0 1 1 868.90,443.10 Z" fill="#9bbb59"/>
<line x1="868.9" y1="483.6" x2="868.90" y2="443.10" stroke="#fff" stroke-width="0.5" opacity=".6"/>
<line x1="868.9" y1="483.6" x2="892.71" y2="450.83" stroke="#fff" stroke-width="0.5" opacity=".6"/>
<line x1="868.9" y1="483.6" x2="909.40" y2="483.60" stroke="#fff" stroke-width="0.5" opacity=".6"/>
<text x="869.4" y="457.6" font-size="7.2" fill="#000" font-weight="400" font-family="Liberation Sans" textLength="13.399999999999977" lengthAdjust="spacingAndGlyphs" stroke="#000" stroke-width="0.25">10%</text>
<text x="887.8" y="475.1" font-size="7.2" fill="#000" font-weight="400" font-family="Liberation Sans" textLength="13.0" lengthAdjust="spacingAndGlyphs" stroke="#000" stroke-width="0.25">15%</text>
<text x="838.9" y="505.6" font-size="7.2" fill="#000" font-weight="400" font-family="Liberation Sans" textLength="13.899999999999977" lengthAdjust="spacingAndGlyphs" stroke="#000" stroke-width="0.25">75%</text>
<rect x="931.4" y="467.40000000000003" width="3.5" height="3.5" fill="#4f81bd"/>
<text x="936.4" y="471.70000000000005" font-size="7.2" fill="#000" font-weight="400" font-family="Liberation Sans" text-anchor="start" stroke="#000" stroke-width="0.2">да</text>
<rect x="931.4" y="481.8" width="3.5" height="3.5" fill="#c0504d"/>
<text x="936.4" y="486.1" font-size="7.2" fill="#000" font-weight="400" font-family="Liberation Sans" text-anchor="start" stroke="#000" stroke-width="0.2">нет</text>
<rect x="931.4" y="496.2" width="3.5" height="3.5" fill="#9bbb59"/>
<text x="936.4" y="500.5" font-size="7.2" fill="#000" font-weight="400" font-family="Liberation Sans" text-anchor="start" stroke="#000" stroke-width="0.2">не знаю</text>
<rect x="973" y="530" width="2" height="11" fill="#000"/>
</g>
<rect x="1.5" y="3.5" width="15" height="15" fill="#fff" stroke="#2d4f8e"/>
<rect x="3" y="5" width="12" height="12" fill="#dbe8f8"/>
<text x="9" y="16.5" font-size="14" font-weight="700" font-family="Liberation Serif" fill="#1d5cc8" text-anchor="middle" textLength="13" lengthAdjust="spacingAndGlyphs">W</text>
<rect x="21" y="5" width="1" height="12" fill="#8596ad"/><rect x="104" y="5" width="1" height="12" fill="#8596ad"/>
<rect x="29" y="4" width="14" height="14" rx="1" fill="#5a4fb8" stroke="#3a2f88" stroke-width="0.8"/>
<rect x="31.5" y="4.8" width="9" height="6" fill="#f2f4fa"/><rect x="33" y="13" width="6" height="4.5" fill="#2a2f55"/><rect x="34.2" y="14" width="2" height="2.5" fill="#ddd"/>
<path d="M54,9 q5,-5 9,0 q2,3 -2,7" fill="none" stroke="#9aa9bc" stroke-width="2.6"/><path d="M52,5 v6 h6 z" fill="#9aa9bc"/>
<path d="M70.25,9.3 h4.5 l-2.25,2.55 z" fill="#9aa9bc"/>
<path d="M94,8 a5.2,5.2 0 1 1 -6,-2" fill="none" stroke="#a3b0c1" stroke-width="2.6"/><path d="M85,4 l5,0 l-2,4.5 z" fill="#a3b0c1"/>
<rect x="109" y="8" width="7" height="1.3" fill="#1a1a1a"/>
<path d="M109,11 h7 l-3.5,4 z" fill="#1a1a1a"/>
<path d="M1260.5,0 V14 Q1260.5,17.5 1264,17.5 H1315 V0 Z" fill="url(#gwin)" stroke="#5e6a7a" stroke-width="1"/>
<path d="M1288.5,0 V17.5" stroke="#6e7b8d" stroke-width="1"/>
<path d="M1315,0 V17.5 H1359 Q1362.5,17.5 1362.5,14 V0 Z" fill="url(#gclose)" stroke="#6b2a20" stroke-width="1"/>
<rect x="1269.5" y="8" width="11" height="4" rx="1" fill="#fff" stroke="#4a5260" stroke-width="1"/>
<rect x="1297.5" y="2.5" width="9" height="9" rx="1" fill="#fff" stroke="#4a5260" stroke-width="1"/>
<rect x="1295.5" y="4.5" width="9" height="9" rx="1" fill="#fff" stroke="#4a5260" stroke-width="1"/><rect x="1298.5" y="7.5" width="3" height="3" fill="none" stroke="#4a5260"/>
<path d="M1336,4.5 L1343.5,11.5 M1343.5,4.5 L1336,11.5" stroke="#4a2a26" stroke-width="4.4" stroke-linecap="square"/>
<path d="M1336,4.5 L1343.5,11.5 M1343.5,4.5 L1336,11.5" stroke="#fff" stroke-width="2.4" stroke-linecap="square"/>
<path d="M1329.5,38 L1333.5,33.5 L1337.5,38" fill="none" stroke="#3a3f48" stroke-width="2.2"/><path d="M1329.5,38 L1333.5,33.5 L1337.5,38" fill="none" stroke="#fff" stroke-width="0.9"/>
<circle cx="1355" cy="35" r="8" fill="#3f74c8"/><circle cx="1355" cy="33" r="6.5" fill="#5b8ad6" opacity=".6"/>
<text x="1355" y="39.5" font-size="12" font-weight="700" fill="#fff" text-anchor="middle" font-family="Liberation Sans">?</text>
<rect x="17.5" y="55.5" width="23" height="24" rx="1.5" fill="#f3c766" stroke="#b88a2e"/>
<rect x="22.5" y="56" width="13" height="3.5" rx="1" fill="#fefefe" stroke="#7a7f88" stroke-width="0.8"/><circle cx="29" cy="55.5" r="1.5" fill="#c9a050" stroke="#7a7f88" stroke-width="0.7"/>
<path d="M26.5,64.5 H38 L42.5,69 V82.5 H26.5 Z" fill="#fff" stroke="#8a8f99"/>
<rect x="28" y="67.5" width="8" height="0.8" fill="#aab2bf"/>
<rect x="28" y="69.5" width="8" height="0.8" fill="#aab2bf"/>
<rect x="28" y="71.5" width="12" height="0.8" fill="#aab2bf"/>
<rect x="28" y="73.5" width="12" height="0.8" fill="#aab2bf"/>
<rect x="28" y="75.5" width="12" height="0.8" fill="#aab2bf"/>
<rect x="28" y="77.5" width="12" height="0.8" fill="#aab2bf"/>
<rect x="28" y="79.5" width="12" height="0.8" fill="#aab2bf"/>
<path d="M27.5,105.8 h5 l-2.5,2.8 z" fill="#4c5f7a"/>
<path d="M64,54 L68.5,63 M70,54 L65.5,63" stroke="#a0aab8" stroke-width="1.4"/><circle cx="64.5" cy="65" r="2.2" fill="none" stroke="#8e99aa" stroke-width="1.3"/><circle cx="69.5" cy="65" r="2.2" fill="none" stroke="#8e99aa" stroke-width="1.3"/>
<path d="M59.5,76.5 h7 l2,2 v8 h-9 z" fill="#f2f4f7" stroke="#a4adba"/><path d="M64.5,80.5 h7 l2,2 v7 h-9 z" fill="#f2f4f7" stroke="#a4adba"/><g fill="#b8bfca"><rect x="61" y="79" width="5" height="0.7"/><rect x="61" y="81" width="3" height="0.7"/><rect x="66" y="83" width="6" height="0.7"/><rect x="66" y="85" width="6" height="0.7"/><rect x="66" y="87" width="6" height="0.7"/></g>
<path d="M60,108 L66,102 L71,106 L64,112 Z" fill="#e9c96a" stroke="#9b7f32" stroke-width="0.8"/><path d="M68,103 L74,97.5 L76,99.5 L70,105 Z" fill="#6a5db8"/>
<path d="M271.25,67.3 h4.5 l-2.25,2.55 z" fill="#4c5f7a"/>
<path d="M326.75,67.3 h4.5 l-2.25,2.55 z" fill="#4c5f7a"/>
<text x="340" y="75" font-size="15" font-weight="700" font-family="Liberation Serif" fill="#2a2a2a">A</text><path d="M351,64 l2,-2.5 l2,2.5 z" fill="#3566b5"/>
<text x="362" y="75" font-size="11" font-weight="700" font-family="Liberation Serif" fill="#2a2a2a">A</text><path d="M371,61.5 h4 l-2,2.5 z" fill="#3566b5"/>
<rect x="385" y="60" width="1" height="18" fill="#bccbde"/><rect x="426" y="60" width="1" height="18" fill="#bccbde"/>
<text x="394.5" y="74.5" font-size="14" font-weight="700" font-family="Liberation Serif" fill="#222" textLength="14.5" lengthAdjust="spacingAndGlyphs">Aa</text>
<path d="M412.75,66.8 h4.5 l-2.25,2.55 z" fill="#4c5f7a"/>
<rect x="437" y="62.5" width="11" height="8" fill="#fff" stroke="#5b6577" stroke-width="0.8"/><text x="438.5" y="69" font-size="5.5" font-family="Liberation Sans" fill="#333">A8</text><path d="M442,73 L449,67 L452,70 L445,76 Z" fill="#eef0f4" stroke="#6b7587" stroke-width="0.8"/>
<text x="200" y="101.5" font-size="13" font-weight="700" font-family="Liberation Serif" fill="#1a1a1a">Ж</text>
<text x="223" y="101.5" font-size="13" font-weight="700" font-style="italic" font-family="Liberation Serif" fill="#1a1a1a">К</text>
<text x="249" y="101" font-size="12.5" font-weight="700" font-family="Liberation Serif" fill="#1a1a1a">Ч</text><rect x="249" y="103" width="9.5" height="1.1" fill="#1a1a1a"/>
<path d="M268.25,95.8 h4.5 l-2.25,2.55 z" fill="#4c5f7a"/>
<text x="281" y="101.5" font-size="10.5" font-weight="700" font-family="Liberation Serif" fill="#333" textLength="16" lengthAdjust="spacingAndGlyphs">abc</text><rect x="281" y="97.5" width="16.5" height="1" fill="#333"/>
<path d="M307,94.5 L313,101.5 M313,94.5 L307,101.5" stroke="#1a1a1a" stroke-width="2"/><text x="314" y="104.5" font-size="5.5" font-weight="700" fill="#3566b5" font-family="Liberation Sans">2</text>
<path d="M330,94.5 L336,101.5 M336,94.5 L330,101.5" stroke="#1a1a1a" stroke-width="2"/><text x="337.5" y="95.5" font-size="5.5" font-weight="700" fill="#3566b5" font-family="Liberation Sans">2</text>
<rect x="352" y="88" width="1" height="19" fill="#bccbde"/>
<text x="368" y="104.5" font-size="17" font-family="Liberation Sans" fill="#dbe9fa" stroke="#5d9ae0" stroke-width="1.2" text-anchor="middle" font-weight="700">A</text>
<path d="M378.75,95.8 h4.5 l-2.25,2.55 z" fill="#4c5f7a"/>
<rect x="391" y="89" width="9" height="8" fill="#f3ec58"/><text x="391" y="96" font-size="8" font-family="Liberation Sans" fill="#222">ab</text><path d="M399,99 L405,92 L407.5,94 L401.5,101 Z" fill="#eef1f6" stroke="#566" stroke-width="0.7"/><rect x="391" y="102" width="16" height="4" fill="#ffff00"/>
<path d="M414.25,95.8 h4.5 l-2.25,2.55 z" fill="#4c5f7a"/>
<text x="433" y="100.5" font-size="15" font-weight="700" font-family="Liberation Serif" fill="#2d55a8" text-anchor="middle">A</text><rect x="425" y="102" width="16" height="4" fill="#ff0000"/>
<path d="M446.25,95.8 h4.5 l-2.25,2.55 z" fill="#4c5f7a"/>
<path d="M446.5,128 V122.5 H452" fill="none" stroke="#8d9cb3" stroke-width="1"/><path d="M449,125 L453,129 M453,126 V129 H450" stroke="#6d7f99" stroke-width="1" fill="none"/>
<path d="M177.5,128 V122.5 H183" fill="none" stroke="#8d9cb3" stroke-width="1"/><path d="M180,125 L184,129 M184,126 V129 H181" stroke="#6d7f99" stroke-width="1" fill="none"/>
<circle cx="470.6" cy="63.6" r="1.3" fill="#3e68b7"/>
<rect x="474" y="63" width="8.5" height="1.1" fill="#111"/>
<circle cx="470.6" cy="68.6" r="1.3" fill="#3e68b7"/>
<rect x="474" y="68" width="8.5" height="1.1" fill="#111"/>
<circle cx="470.6" cy="73.6" r="1.3" fill="#3e68b7"/>
<rect x="474" y="73" width="8.5" height="1.1" fill="#111"/>
<path d="M489.25,66.8 h4.5 l-2.25,2.55 z" fill="#4c5f7a"/>
<text x="502.5" y="66" font-size="5.5" font-weight="700" fill="#3e68b7" font-family="Liberation Sans">1</text>
<rect x="508" y="63" width="9" height="1.1" fill="#111"/>
<text x="502.5" y="71" font-size="5.5" font-weight="700" fill="#3e68b7" font-family="Liberation Sans">2</text>
<rect x="508" y="68" width="9" height="1.1" fill="#111"/>
<text x="502.5" y="76" font-size="5.5" font-weight="700" fill="#3e68b7" font-family="Liberation Sans">3</text>
<rect x="508" y="73" width="9" height="1.1" fill="#111"/>
<path d="M524.25,66.8 h4.5 l-2.25,2.55 z" fill="#4c5f7a"/>
<text x="536" y="66" font-size="5.5" font-weight="700" fill="#3e68b7" font-family="Liberation Sans">1</text><text x="539.5" y="71" font-size="5.5" font-weight="700" fill="#3e68b7" font-family="Liberation Sans">a</text><text x="543.5" y="76" font-size="5.5" font-weight="700" fill="#3e68b7" font-family="Liberation Sans">i</text>
<rect x="541" y="63" width="11" height="1.1" fill="#111"/>
<rect x="546" y="68" width="6" height="1.1" fill="#111"/>
<rect x="549" y="73" width="3" height="1.1" fill="#111"/>
<path d="M554.25,66.8 h4.5 l-2.25,2.55 z" fill="#4c5f7a"/>
<rect x="567" y="59" width="1" height="19" fill="#b6c6da"/>
<rect x="621" y="59" width="1" height="19" fill="#b6c6da"/>
<rect x="654" y="59" width="1" height="19" fill="#b6c6da"/>
<rect x="578" y="62.5" width="14" height="1.1" fill="#111"/>
<rect x="583" y="65" width="9" height="1.6" fill="#111"/>
<rect x="583" y="67.3" width="9" height="1.6" fill="#111"/>
<rect x="578" y="69.8" width="14" height="1.1" fill="#111"/>
<rect x="578" y="72.3" width="14" height="1.1" fill="#111"/>
<rect x="583" y="61" width="1" height="1" fill="#111"/>
<rect x="583" y="63" width="1" height="1" fill="#111"/>
<rect x="583" y="65" width="1" height="1" fill="#111"/>
<rect x="583" y="67" width="1" height="1" fill="#111"/>
<rect x="583" y="69" width="1" height="1" fill="#111"/>
<rect x="583" y="71" width="1" height="1" fill="#111"/>
<rect x="583" y="73" width="1" height="1" fill="#111"/>
<rect x="583" y="75" width="1" height="1" fill="#111"/>
<rect x="601" y="62.5" width="14" height="1.1" fill="#111"/>
<rect x="606" y="65" width="9" height="1.6" fill="#111"/>
<rect x="606" y="67.3" width="9" height="1.6" fill="#111"/>
<rect x="601" y="69.8" width="14" height="1.1" fill="#111"/>
<rect x="601" y="72.3" width="14" height="1.1" fill="#111"/>
<rect x="606" y="61" width="1" height="1" fill="#111"/>
<rect x="606" y="63" width="1" height="1" fill="#111"/>
<rect x="606" y="65" width="1" height="1" fill="#111"/>
<rect x="606" y="67" width="1" height="1" fill="#111"/>
<rect x="606" y="69" width="1" height="1" fill="#111"/>
<rect x="606" y="71" width="1" height="1" fill="#111"/>
<rect x="606" y="73" width="1" height="1" fill="#111"/>
<rect x="606" y="75" width="1" height="1" fill="#111"/>
<path d="M576,67.5 l4,-3 v2 h3 v2 h-3 v2 z" fill="#3e68b7"/>
<path d="M604,67.5 l-4,-3 v2 h-3 v2 h3 v2 z" fill="#3e68b7"/>
<text x="630.5" y="69" font-size="8" font-weight="700" font-family="Liberation Serif" fill="#2f5ca8">A</text><text x="630.5" y="77" font-size="8" font-weight="700" font-family="Liberation Serif" fill="#b2473e">Я</text>
<rect x="642" y="61" width="1.2" height="12" fill="#111"/><path d="M639.5,72 h6.2 l-3.1,4.5 z" fill="#111"/>
<path d="M671,63 H676.5 V64.5 H675.5 V75.5 H674 V64.5 H672.8 V75.5 H671.3 V70 Q666,70 666,66.5 Q666,63 671,63 Z" fill="#111"/>
<rect x="469" y="92" width="14" height="1.1" fill="#111"/>
<rect x="492" y="92" width="14" height="1.1" fill="#111"/>
<rect x="516" y="92" width="14" height="1.1" fill="#111"/>
<rect x="469" y="94" width="10" height="1.1" fill="#111"/>
<rect x="494" y="94" width="10" height="1.1" fill="#111"/>
<rect x="520" y="94" width="10" height="1.1" fill="#111"/>
<rect x="469" y="96" width="14" height="1.1" fill="#111"/>
<rect x="492" y="96" width="14" height="1.1" fill="#111"/>
<rect x="516" y="96" width="14" height="1.1" fill="#111"/>
<rect x="469" y="98" width="10" height="1.1" fill="#111"/>
<rect x="494" y="98" width="10" height="1.1" fill="#111"/>
<rect x="520" y="98" width="10" height="1.1" fill="#111"/>
<rect x="469" y="100" width="14" height="1.1" fill="#111"/>
<rect x="492" y="100" width="14" height="1.1" fill="#111"/>
<rect x="516" y="100" width="14" height="1.1" fill="#111"/>
<rect x="469" y="102" width="10" height="1.1" fill="#111"/>
<rect x="494" y="102" width="10" height="1.1" fill="#111"/>
<rect x="520" y="102" width="10" height="1.1" fill="#111"/>
<rect x="535.5" y="87.5" width="21" height="21" rx="2.5" fill="url(#gsel)" stroke="#d9a443"/>
<rect x="539" y="92" width="14" height="1.1" fill="#111"/>
<rect x="539" y="94" width="14" height="1.1" fill="#111"/>
<rect x="539" y="96" width="14" height="1.1" fill="#111"/>
<rect x="539" y="98" width="14" height="1.1" fill="#111"/>
<rect x="539" y="100" width="14" height="1.1" fill="#111"/>
<rect x="539" y="102" width="14" height="1.1" fill="#111"/>
<rect x="561" y="87" width="1" height="20" fill="#b6c6da"/><rect x="602" y="87" width="1" height="20" fill="#b6c6da"/>
<path d="M573.5,89.5 l-2.8,3.5 h5.6 z M573.5,106 l-2.8,-3.5 h5.6 z" fill="#3e68b7"/><rect x="573" y="92" width="1.2" height="11" fill="#3e68b7"/>
<rect x="578" y="93" width="8" height="1.3" fill="#111"/>
<rect x="578" y="96" width="8" height="1.3" fill="#111"/>
<rect x="578" y="99" width="8" height="1.3" fill="#111"/>
<rect x="578" y="102" width="8" height="1.3" fill="#111"/>
<path d="M588.25,95.8 h4.5 l-2.25,2.55 z" fill="#4c5f7a"/>
<path d="M613.5,95.5 L619.5,89.5 L626,96 L620,102 Z" fill="#fff" stroke="#333" stroke-width="0.9"/><path d="M618,94 L626,96 L620,102 L614.5,96.5 Z" fill="#aac6ea" opacity=".8"/><circle cx="619" cy="90" r="1.4" fill="none" stroke="#555" stroke-width="0.7"/><path d="M626,95 q2.5,2.5 0.5,6" fill="none" stroke="#3e68b7" stroke-width="1.8"/><rect x="611.5" y="103" width="15.5" height="3" fill="#fff" stroke="#9a9a9a" stroke-width="0.7"/>
<path d="M632.25,95.8 h4.5 l-2.25,2.55 z" fill="#4c5f7a"/>
<rect x="646" y="92" width="0.9" height="0.9" fill="#555"/>
<rect x="646" y="94" width="0.9" height="0.9" fill="#555"/>
<rect x="646" y="96" width="0.9" height="0.9" fill="#555"/>
<rect x="646" y="98" width="0.9" height="0.9" fill="#555"/>
<rect x="646" y="100" width="0.9" height="0.9" fill="#555"/>
<rect x="646" y="102" width="0.9" height="0.9" fill="#555"/>
<rect x="652.5" y="92" width="0.9" height="0.9" fill="#555"/>
<rect x="652.5" y="94" width="0.9" height="0.9" fill="#555"/>
<rect x="652.5" y="96" width="0.9" height="0.9" fill="#555"/>
<rect x="652.5" y="98" width="0.9" height="0.9" fill="#555"/>
<rect x="652.5" y="100" width="0.9" height="0.9" fill="#555"/>
<rect x="652.5" y="102" width="0.9" height="0.9" fill="#555"/>
<rect x="659" y="92" width="0.9" height="0.9" fill="#555"/>
<rect x="659" y="94" width="0.9" height="0.9" fill="#555"/>
<rect x="659" y="96" width="0.9" height="0.9" fill="#555"/>
<rect x="659" y="98" width="0.9" height="0.9" fill="#555"/>
<rect x="659" y="100" width="0.9" height="0.9" fill="#555"/>
<rect x="659" y="102" width="0.9" height="0.9" fill="#555"/>
<rect x="646" y="92" width="0.9" height="0.9" fill="#555"/>
<rect x="648" y="92" width="0.9" height="0.9" fill="#555"/>
<rect x="650" y="92" width="0.9" height="0.9" fill="#555"/>
<rect x="652" y="92" width="0.9" height="0.9" fill="#555"/>
<rect x="654" y="92" width="0.9" height="0.9" fill="#555"/>
<rect x="656" y="92" width="0.9" height="0.9" fill="#555"/>
<rect x="658" y="92" width="0.9" height="0.9" fill="#555"/>
<rect x="646" y="98" width="0.9" height="0.9" fill="#555"/>
<rect x="648" y="98" width="0.9" height="0.9" fill="#555"/>
<rect x="650" y="98" width="0.9" height="0.9" fill="#555"/>
<rect x="652" y="98" width="0.9" height="0.9" fill="#555"/>
<rect x="654" y="98" width="0.9" height="0.9" fill="#555"/>
<rect x="656" y="98" width="0.9" height="0.9" fill="#555"/>
<rect x="658" y="98" width="0.9" height="0.9" fill="#555"/>
<rect x="646" y="104" width="13.5" height="1.3" fill="#111"/>
<path d="M665.25,95.8 h4.5 l-2.25,2.55 z" fill="#4c5f7a"/>
<path d="M674.5,128 V122.5 H680" fill="none" stroke="#8d9cb3" stroke-width="1"/><path d="M677,125 L681,129 M681,126 V129 H678" stroke="#6d7f99" stroke-width="1" fill="none"/>
<rect x="983.5" y="54.5" width="14" height="19" fill="#eef3fa" stroke="#c2d0e2"/><rect x="983.5" y="73.5" width="14" height="19" fill="#e5ecf6" stroke="#b9c8dc"/><rect x="983.5" y="92.5" width="14" height="20" fill="#e5ecf6" stroke="#b9c8dc"/>
<path d="M988,65 h5 l-2.5,-3 z" fill="#c6d0dc"/>
<path d="M988.0,82.3 h5 l-2.5,2.8 z" fill="#4c5668"/>
<rect x="988" y="99" width="5" height="1" fill="#4c5668"/>
<path d="M988.0,101.8 h5 l-2.5,2.8 z" fill="#4c5668"/>
<path d="M1014.5,73 L1022.5,55.5 L1025,55.5 L1029,66" fill="none" stroke="#b145c4" stroke-width="1.3"/><path d="M1014,73 L1022,55.5 L1024.5,55.5 L1017,73 Z" fill="#b145c4"/><path d="M1018,67.5 H1027" stroke="#b145c4" stroke-width="1.2"/><path d="M1012.5,73 H1018" stroke="#b145c4" stroke-width="1"/>
<path d="M1022,81.5 L1031.5,57.5" stroke="#4d7fcc" stroke-width="1.3" fill="none"/><path d="M1030.5,57.5 L1033.5,57.5 L1043,81.5 L1037.5,81.5 Z" fill="#6f9ee2" stroke="#3e71c0" stroke-width="0.8"/><path d="M1025.5,73 H1038.5" stroke="#4d7fcc" stroke-width="1.2"/><path d="M1019,81.5 H1026 M1035.5,81.5 H1045" stroke="#4d7fcc" stroke-width="1.3"/>
<path d="M1043.5,106.3 h5 l-2.5,2.8 z" fill="#4c5f7a"/>
<path d="M1049.5,128 V122.5 H1055" fill="none" stroke="#8d9cb3" stroke-width="1"/><path d="M1052,125 L1056,129 M1056,126 V129 H1053" stroke="#6d7f99" stroke-width="1" fill="none"/>
<g stroke="#2f4f8a" stroke-width="0.9"><rect x="1071.5" y="55.5" width="4" height="4" fill="#dfe6f2"/><rect x="1079.5" y="55.5" width="4" height="4" fill="#dfe6f2"/><rect x="1070.5" y="59.5" width="6" height="8" fill="#fff"/><rect x="1078.5" y="59.5" width="6" height="8" fill="#fff"/></g><rect x="1071" y="62" width="2" height="5" fill="#4a6fb0"/><rect x="1079" y="62" width="2" height="5" fill="#4a6fb0"/><rect x="1076" y="61" width="3" height="2" fill="#2f4f8a"/>
<path d="M1127.25,60.8 h4.5 l-2.25,2.55 z" fill="#4c5f7a"/>
<text x="1070" y="82" font-size="8.5" font-weight="700" font-family="Liberation Sans" fill="#444">a</text><text x="1075" y="82" font-size="8.5" font-family="Liberation Serif" fill="#999">b</text><text x="1076.5" y="90" font-size="8.5" font-weight="700" font-family="Liberation Sans" fill="#333">a</text><text x="1081.5" y="90" font-size="8.5" font-weight="700" font-family="Liberation Sans" fill="#1a8a2a">c</text><path d="M1071.5,84.5 v2.5 h3.5" fill="none" stroke="#333" stroke-width="0.9"/>
<path d="M1073.5,97.5 V109 L1076,106.5 L1078.5,111.5 L1080.5,110.5 L1078,105.5 L1082,105.5 Z" fill="#fff" stroke="#3a4250" stroke-width="0.9"/>
<path d="M1143.75,104.8 h4.5 l-2.25,2.55 z" fill="#4c5f7a"/>
<text x="1185" y="64.7" font-size="13.5" font-weight="700" font-family="Liberation Serif" fill="#222" textLength="28.5" lengthAdjust="spacingAndGlyphs">ABC</text>
<path d="M1190,74 L1197,81 L1214,62" fill="none" stroke="#2f5fb8" stroke-width="5" stroke-linejoin="miter"/><path d="M1190,74 L1197,81 L1214,62" fill="none" stroke="#78a6ee" stroke-width="2.4"/>
<path d="M1197.25,106.8 h4.5 l-2.25,2.55 z" fill="#4c5f7a"/>
<path d="M1269,56 L1273,60 L1277,75 H1292 L1295,63 H1274" fill="#eee" stroke="#555" stroke-width="1.4"/>
<path d="M1276,66 H1293 M1277,70 H1292 M1280,63 V75 M1284,63 V75 M1288,63 V75" stroke="#777" stroke-width="0.8"/>
<circle cx="1279" cy="80.5" r="2" fill="#fff" stroke="#333" stroke-width="1.3"/><circle cx="1290" cy="80.5" r="2" fill="#fff" stroke="#333" stroke-width="1.3"/>
<circle cx="1288.5" cy="61.5" r="6.5" fill="#2f7fd0"/><path d="M1284,59 q3,-3 5,0 q2,3 -2,5 q-3,1 -3,-5" fill="#4ca64a"/><path d="M1290,63 q3,-1 3,2 q-2,2 -3,-2" fill="#4ca64a"/>
<path d="M1280.25,106.8 h4.5 l-2.25,2.55 z" fill="#4c5f7a"/>
<rect x="1141" y="137" width="16" height="23" fill="#b5c9e2"/><rect x="1141" y="160" width="16" height="1" fill="#9fb3cd"/>
<rect x="1144" y="139.5" width="9" height="1.5" fill="#4e6a92"/>
<path d="M1142.5,146.5 h4 v2 h6 v7 h-3 v2 h-4 v-2 h-3 z" fill="#f3eef4" stroke="#5f6570" stroke-width="1"/>
<path d="M1144,170.5 h9 l-4.5,-4.5 z" fill="#3e4e6e"/>
<rect x="1140.5" y="608.5" width="15" height="33" rx="2" fill="#c3d5ee" stroke="#6f87a8"/>
<rect x="1144" y="619.5" width="7" height="1" fill="#6b7e98"/>
<rect x="1144" y="622" width="7" height="1" fill="#6b7e98"/>
<rect x="1144" y="624.5" width="7" height="1" fill="#6b7e98"/>
<rect x="1144" y="627" width="7" height="1" fill="#6b7e98"/>
<path d="M1144,654 h9 l-4.5,4 z" fill="#3e4e6e"/>
<rect x="1141" y="664" width="16" height="1" fill="#9fb3cd"/><rect x="1141" y="665" width="16" height="51" fill="#b3c6de" opacity=".5"/>
<path d="M1146,671.5 h5 l-2.5,-2.5 z M1146,674.5 h5 l-2.5,-2.5 z" fill="#2e3a50"/><rect x="1145.5" y="675" width="6" height="1" fill="#2e3a50"/>
<circle cx="1148.5" cy="689.5" r="2.8" fill="#b9c3d0" stroke="#555f6e" stroke-width="1"/>
<path d="M1146,704 h5 l-2.5,2.5 z M1146,707 h5 l-2.5,2.5 z" fill="#2e3a50"/><rect x="1145.5" y="703" width="6" height="1" fill="#2e3a50"/>
<g stroke="#e9d85a" stroke-width="1.6"><path d="M1176,148 v10 M1171,153 h10 M1172.5,149.5 l7,7 M1179.5,149.5 l-7,7"/></g><circle cx="1176" cy="153" r="1.8" fill="#fff6ee"/>
<path d="M1174,215.5 h5 v4 h4 v5 h-4 v4 h-5 v-4 h-4 v-5 h4 z" fill="#f3d65a" stroke="#b9982e" stroke-width="0.8"/>
<path d="M1168,284 l2,2 l2,9 h7 l2,-6 h-10" fill="none" stroke="#556" stroke-width="1"/><circle cx="1173" cy="297.5" r="1.2" fill="#556"/><circle cx="1179" cy="297.5" r="1.2" fill="#556"/><path d="M1180,287 h2.5 v-2.5 h2.5 v2.5 h2.5 v2.5 h-2.5 v2.5 h-2.5 v-2.5 h-2.5 z" fill="#f3d65a" stroke="#b9982e" stroke-width="0.6"/>
<clipPath id="adclip"><rect x="1173" y="553" width="178" height="148"/></clipPath>
<g clip-path="url(#adclip)">
<filter id="adblur" x="-10%" y="-10%" width="120%" height="120%"><feGaussianBlur stdDeviation="2.2"/></filter>
<g filter="url(#adblur)">
<path d="M1165,652 C1215,670 1290,668 1360,606 V710 H1165 Z" fill="url(#gad1)"/>
<path d="M1165,674 C1225,694 1300,694 1360,645 V710 H1165 Z" fill="url(#gad2)" opacity=".9"/>
<path d="M1165,688 C1200,700 1230,704 1260,704 L1165,712 Z" fill="#fff6d8" opacity=".8"/>
<path d="M1165,650 C1215,666 1290,664 1360,606" fill="none" stroke="#fffef6" stroke-width="3" opacity=".9"/>
</g>
</g>
<text x="1180" y="572" font-size="13" font-weight="700" font-style="italic" font-family="Liberation Sans" fill="#1a1a1a" stroke="#1a1a1a" stroke-width="0.6" textLength="68" lengthAdjust="spacingAndGlyphs">Microsoft</text>
<g fill="none" stroke-width="2.4"><path d="M1183,598 h8 v6 M1183,598 v8 h6" stroke="#f7c12a"/><path d="M1205,598 h-8 v6 M1205,598 v8 h-6" stroke="#f5a21e"/><path d="M1183,623 h8 v-6 M1183,623 v-8 h6" stroke="#ef7f1d"/><path d="M1205,623 h-8 v-6 M1205,623 v-8 h-6" stroke="#ec6a1c"/></g>
<text x="1206.5" y="622.5" font-size="29" font-family="Liberation Sans" fill="#111" textLength="73" lengthAdjust="spacingAndGlyphs">.Office</text>
<text x="1253" y="603.5" font-size="5.5" font-weight="700" font-family="Liberation Sans" fill="#222" textLength="28" lengthAdjust="spacingAndGlyphs">Microsoft®</text>
<rect x="117" y="718" width="1" height="20" fill="#9db0c8"/><rect x="118" y="718" width="1" height="20" fill="#eef3fa" opacity=".6"/>
<rect x="228" y="718" width="1" height="20" fill="#9db0c8"/><rect x="229" y="718" width="1" height="20" fill="#eef3fa" opacity=".6"/>
<rect x="321" y="718" width="1" height="20" fill="#9db0c8"/><rect x="322" y="718" width="1" height="20" fill="#eef3fa" opacity=".6"/>
<rect x="1112" y="718" width="1" height="20" fill="#9db0c8"/><rect x="1113" y="718" width="1" height="20" fill="#eef3fa" opacity=".6"/>
<path d="M238,728 L247,722 L253,727 L244,733 Z" fill="#f6f6f6" stroke="#3b5da0" stroke-width="1"/><path d="M238,728 v2 L244,735 L253,729 v-2" fill="#5a86d0" stroke="#3b5da0" stroke-width=".8"/><path d="M246,720 L252,726 M252,720 L246,726" stroke="#e33" stroke-width="1.8"/>
<circle cx="27" cy="747" r="12" fill="none" stroke="#3a5a80" stroke-width="1"/>
<rect x="1117.5" y="718.5" width="18" height="18" rx="2" fill="url(#gsel)" stroke="#e2a73c"/>
<rect x="1121.5" y="721.5" width="10" height="12" fill="#fff" stroke="#333"/>
<rect x="1123" y="724" width="7" height="1" fill="#333"/>
<rect x="1123" y="726.5" width="7" height="1" fill="#333"/>
<rect x="1123" y="729" width="7" height="1" fill="#333"/>
<rect x="1123" y="731.5" width="7" height="1" fill="#333"/>
<rect x="1139.5" y="721.5" width="11" height="9" fill="#fff" stroke="#444"/><rect x="1141" y="724" width="7" height="1" fill="#666"/><rect x="1141" y="726.5" width="5" height="1" fill="#666"/><circle cx="1148.5" cy="731.5" r="3.8" fill="#2f7fd0"/><path d="M1146.5,730 q2,-2 3,0 q0,2 -2,3" fill="#4aa64a"/>
<rect x="1160" y="722" width="8" height="1" fill="#555"/>
<rect x="1177" y="722" width="10" height="1.2" fill="#555"/>
<rect x="1162" y="725" width="6" height="1" fill="#555"/>
<rect x="1177" y="725" width="10" height="1.2" fill="#555"/>
<rect x="1160" y="728" width="8" height="1" fill="#555"/>
<rect x="1177" y="728" width="10" height="1.2" fill="#555"/>
<rect x="1162" y="731" width="6" height="1" fill="#555"/>
<rect x="1177" y="731" width="10" height="1.2" fill="#555"/>
<circle cx="1238" cy="727" r="7.5" fill="#e9eef5" stroke="#6d7785" stroke-width="1"/><rect x="1234" y="726.3" width="8" height="1.6" fill="#333"/>
<rect x="1246" y="726.5" width="100" height="1" fill="#8a97a8"/><rect x="1296" y="723" width="1" height="8" fill="#8a97a8"/>
<path d="M1272.5,720.5 h8 v9 l-4,4 l-4,-4 z" fill="#f4f6f9" stroke="#5f6a78"/>
<circle cx="1354" cy="727" r="7.5" fill="#e9eef5" stroke="#6d7785" stroke-width="1"/><rect x="1350" y="726.3" width="8" height="1.6" fill="#333"/><rect x="1353.2" y="723" width="1.6" height="8" fill="#333"/>
</svg>
</body></html>
